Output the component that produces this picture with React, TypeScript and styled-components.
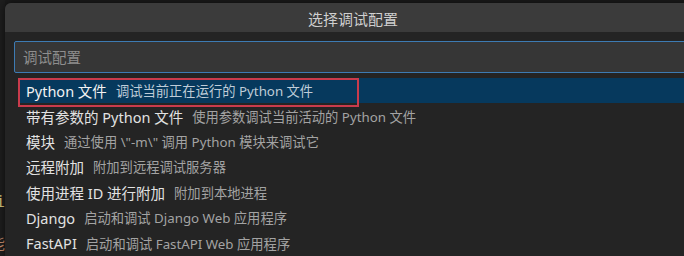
import React from "react";
import styled, { createGlobalStyle } from "styled-components";

const Global = createGlobalStyle`
  html, body {
    margin: 0;
    padding: 0;
    background: #1b1b1b;
    overflow: hidden;
    width: 684px;
    height: 256px;
  }
  * { box-sizing: border-box; }
`;

const FONT = `"Noto Sans", "Noto Sans CJK SC", sans-serif`;

const Screen = styled.div`
  display: flex;
  align-items: flex-start;
  width: 684px;
  height: 256px;
  overflow: hidden;
  background: #1b1b1b;
`;

const EditorPeek = styled.div`
  flex: 0 0 5px;
  height: 256px;
  background: #1e1e1e;
  overflow: hidden;
  display: flex;
  flex-direction: column;
  align-items: flex-end;
  padding-top: 192px;
  font-family: "DejaVu Sans Mono", "Noto Sans CJK SC", monospace;
  font-size: 15px;
  line-height: 21px;
`;

const CodeLine = styled.div<{ $color: string }>`
  white-space: nowrap;
  color: ${(p) => p.$color};
  height: 21px;
  margin-bottom: ${(p) => (p.$color === "#d7c47a" ? "21px" : "0")};
`;

const Dialog = styled.div`
  flex: 0 0 696px;
  width: 696px;
  height: 253px;
  margin-top: 3px;
  background: #242424;
  border-radius: 6px 6px 0 0;
  overflow: hidden;
  box-shadow: 0 0 8px rgba(0, 0, 0, 0.6);
  font-family: ${FONT};
`;

const TitleBar = styled.div`
  height: 29px;
  background: #3b3b3b;
  display: flex;
  align-items: center;
  justify-content: center;
  color: #cfcfcf;
  font-size: 15px;
  padding-top: 1px;
`;

const Body = styled.div`
  padding: 9px 0 0 0;
`;

const SearchBox = styled.input`
  display: block;
  margin: 0 9px;
  width: calc(100% - 18px);
  height: 32px;
  background: #363636;
  border: 1px solid #3d7bb3;
  border-radius: 2px;
  padding: 0 0 0 8px;
  font-family: ${FONT};
  font-size: 14.5px;
  color: #e0e0e0;
  outline: none;
  &::placeholder {
    color: #8e8e8e;
  }
`;

const List = styled.div`
  margin-top: 5px;
  margin-left: 13px;
  display: flex;
  flex-direction: column;
`;

const Row = styled.div<{ $selected?: boolean }>`
  position: relative;
  height: 25.4px;
  display: flex;
  align-items: center;
  padding-left: 8px;
  white-space: nowrap;
  background: ${(p) => (p.$selected ? "#06395d" : "transparent")};
`;

const Highlight = styled.div`
  position: absolute;
  left: 0;
  top: 0;
  width: 341px;
  height: 29px;
  border: 2px solid #c93b4c;
  pointer-events: none;
`;

const Label = styled.span<{ $selected?: boolean }>`
  font-size: 14.5px;
  color: ${(p) => (p.$selected ? "#f2f2f2" : "#e2e2e2")};
`;

const Description = styled.span<{ $selected?: boolean }>`
  font-size: 13.3px;
  margin-left: 9px;
  color: ${(p) => (p.$selected ? "#bfccd8" : "#a3a3a3")};
`;

const items = [
  { label: "Python 文件", desc: "调试当前正在运行的 Python 文件" },
  { label: "带有参数的 Python 文件", desc: "使用参数调试当前活动的 Python 文件" },
  { label: "模块", desc: '通过使用 \\"-m\\" 调用 Python 模块来调试它' },
  { label: "远程附加", desc: "附加到远程调试服务器" },
  { label: "使用进程 ID 进行附加", desc: "附加到本地进程" },
  { label: "Django", desc: "启动和调试 Django Web 应用程序" },
  { label: "FastAPI", desc: "启动和调试 FastAPI Web 应用程序" },
];

export default function App() {
  return (
    <>
      <Global />
      <Screen>
        <EditorPeek>
          <CodeLine $color="#d7c47a">i</CodeLine>
          <CodeLine $color="#c98d6d">能</CodeLine>
        </EditorPeek>
        <Dialog>
          <TitleBar>选择调试配置</TitleBar>
          <Body>
            <SearchBox placeholder="调试配置" readOnly />
            <List>
              {items.map((it, i) => (
                <Row key={i} $selected={i === 0}>
                  <Label $selected={i === 0}>{it.label}</Label>
                  <Description $selected={i === 0}>{it.desc}</Description>
                  {i === 0 && <Highlight />}
                </Row>
              ))}
            </List>
          </Body>
        </Dialog>
      </Screen>
    </>
  );
}
